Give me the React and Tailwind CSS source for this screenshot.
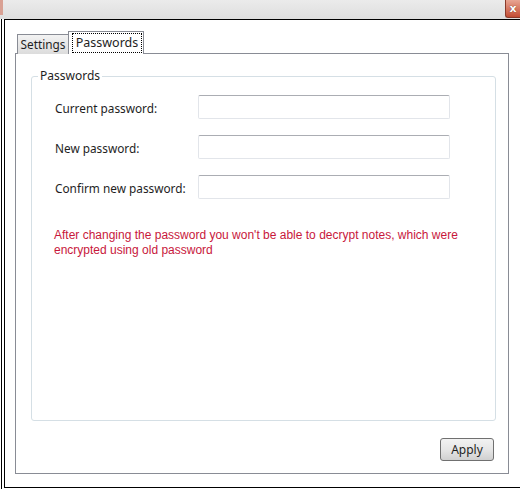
import { useState } from 'react'

const fields = ['Current password:', 'New password:', 'Confirm new password:']

export default function App() {
  const [values, setValues] = useState(['', '', ''])

  return (
    <div className="w-[520px] h-[489px] bg-white overflow-hidden flex flex-col font-['Noto_Sans',sans-serif] text-[12px] text-[#1e1e1e]">
      {/* title bar strip */}
      <div className="h-[19px] flex bg-gradient-to-b from-[#ebebeb] to-[#dedede]">
        <div className="w-[3px] h-[15px] bg-[#d9a194]" />
        <div className="flex-1" />
        <div className="w-[15px] h-[18px] rounded-bl-[3px] border-l border-b border-[#8a3b2b] bg-gradient-to-b from-[#e8a593] to-[#c24b33] flex items-center justify-center">
          <span className="text-white font-bold text-[11px] leading-none font-['DejaVu_Sans',sans-serif] [text-shadow:0_0_1px_#5a1a10]">x</span>
        </div>
      </div>

      {/* window body */}
      <div className="flex-1 flex">
        <div className="w-[4px] flex flex-col">
          <div className="flex-1 border-l border-black ml-px" />
        </div>
        <div className="flex-1 flex flex-col border-l border-t border-b border-black mb-[1px] pt-[11px] pl-[10px] pr-[11px] pb-[13px]">
          {/* tabs */}
          <div className="flex items-end pl-[2px] h-[23px] -mb-px relative z-10">
            <div className="h-[20px] w-[52px] border border-b-0 border-[#898c95] bg-gradient-to-b from-[#f3f3f3] to-[#dcdcdc] flex items-center justify-center">
              <span className="leading-none pt-px text-[11.8px]">Settings</span>
            </div>
            <div className="h-[23px] w-[76px] -ml-px border border-b-0 border-[#898c95] bg-white flex pt-[1px] pl-[3px] pr-[1px]">
              <div className="flex-1 h-[20px] border border-dotted border-black flex items-center justify-center">
                <span className="leading-none text-[12.5px]">Passwords</span>
              </div>
            </div>
          </div>

          {/* tab page */}
          <div className="flex-1 flex flex-col border border-[#898c95] pt-[14px] pl-[15px] pr-[12px] pb-[12px]">
            <fieldset className="flex-1 border border-[#d5dfe5] rounded-[3px] pl-[23px]">
              <legend className="ml-[-17px] px-[2px] leading-[16px]">Passwords</legend>
              <div className="grid grid-cols-[143px_252px] gap-y-[16px] pt-[11px] items-center">
                {fields.map((label, i) => (
                  <div key={label} className="contents">
                    <label className="leading-[16px] pt-px text-[11.8px]">{label}</label>
                    <input
                      type="password"
                      value={values[i]}
                      onChange={(e) => {
                        const next = [...values]
                        next[i] = e.target.value
                        setValues(next)
                      }}
                      className="h-[24px] w-[252px] rounded-[2px] border border-[#e2e5ea] border-t-[#abadb3] bg-white px-1 outline-none"
                    />
                  </div>
                ))}
              </div>
              <p className="mt-[29px] -ml-px font-['Liberation_Sans',sans-serif] text-[12px] leading-[15px] text-[#c8173b]">
                After changing the password you won't be able to decrypt notes, which were
                <br />
                encrypted using old password
              </p>
            </fieldset>

            <div className="flex justify-end pt-[17px] pr-[2px]">
              <button className="h-[23px] w-[54px] rounded-[3px] border border-[#707070] bg-gradient-to-b from-[#f2f2f2] via-[#e6e6e6] to-[#d0d0d0] leading-none">
                Apply
              </button>
            </div>
          </div>
        </div>
      </div>
    </div>
  )
}
